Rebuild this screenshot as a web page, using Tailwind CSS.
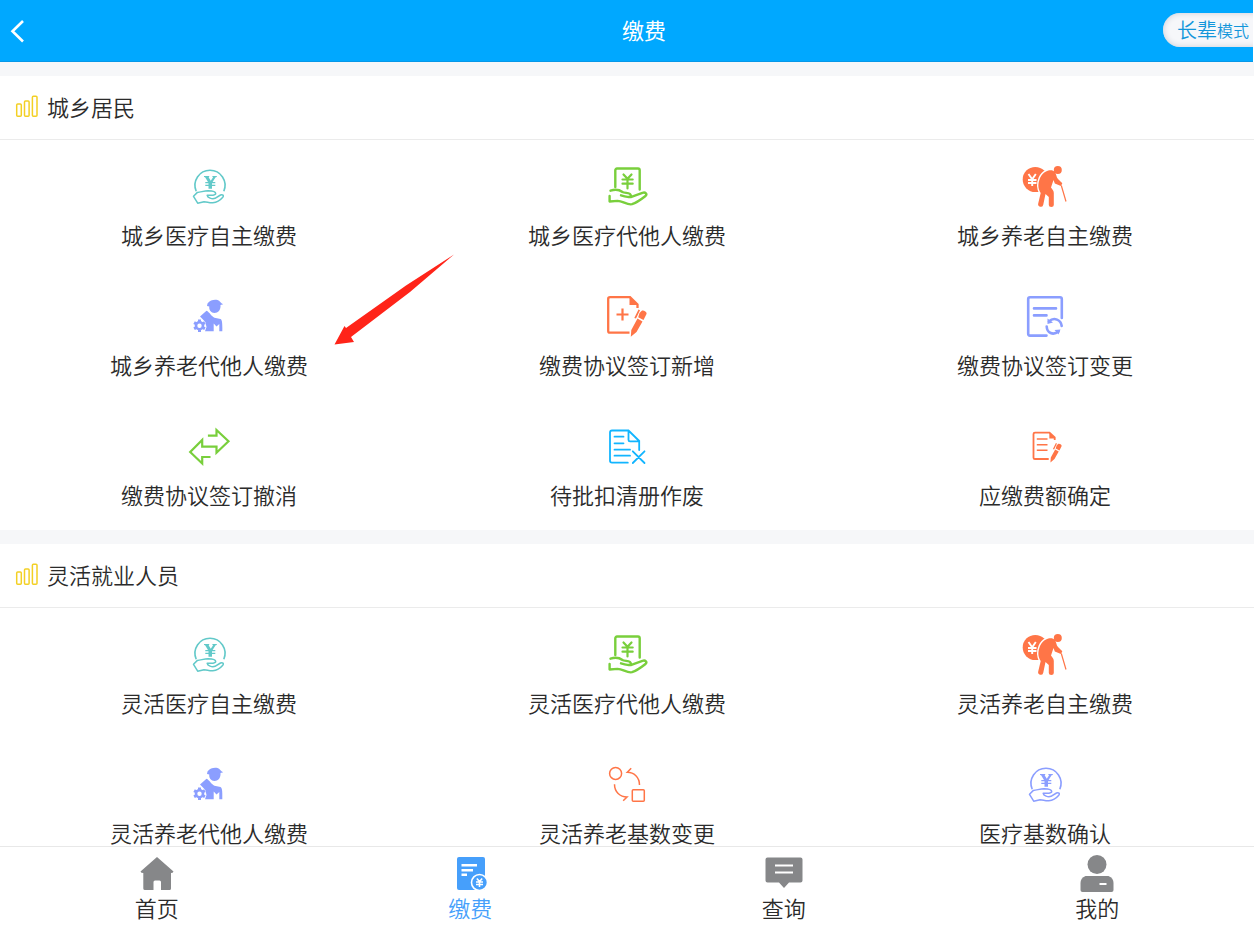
<!DOCTYPE html>
<html lang="zh-CN">
<head>
<meta charset="utf-8">
<meta name="viewport" content="width=device-width, initial-scale=1">
<title>缴费</title>
<script src="https://cdn.jsdelivr.net/npm/@tailwindcss/browser@4"></script>
</head>
<body class="bg-white font-['Noto_Sans_CJK_SC',sans-serif] font-[350] text-[22px] leading-7 text-[#2b2b2b]">
<svg class="hidden" aria-hidden="true">
  <defs>
    <symbol id="bars" viewBox="0 0 24 24"><g fill="none" stroke="#f3d024" stroke-width="1.5"><rect x="1.7" y="10" width="4.6" height="12.3" rx="1"/><rect x="9.5" y="7" width="4.6" height="15.3" rx="1"/><rect x="17.4" y="2.2" width="4.6" height="20.1" rx="1"/></g></symbol>
    <symbol id="coin" viewBox="0 0 48 48">
      <path d="M11.2 28.2A15 15 0 1 1 38.8 28.2" fill="none" stroke="currentColor" stroke-width="1.6"/>
      <path d="M19 13h5.2v1l-.6.2 2.2 3.6 2.3-3.6-.7-.2v-1h4.4v1l-1.2.3-3 4.7h2.7v1.3h-3.3v1.4h3.3V23H27v2.8h-3.5V23h-3.2v-1.3h3.2v-1.4h-3.2V19H23l-2.9-4.7-1.1-.3z" fill="currentColor"/>
      <path d="M8.5 33.3L12.4 29.4C15.500 29.300 19 27.800 23 27.700C26 27.700 30.700 28.500 30.700 30.500C30.700 32.500 26.500 32.400 22.200 32.300C22.500 34.500 27 36.600 30 35.300L35.500 32C37.500 31 39.300 32.600 37.800 34.200C35 37.500 31 39.400 27.800 39.700C24 39.900 22 38.700 19 38.700L12.700 40.200Z" fill="none" stroke="currentColor" stroke-width="1.500" stroke-linejoin="round"/>
    </symbol>
    <symbol id="bill" viewBox="0 0 48 48"><g fill="none" stroke="#79cf3c" stroke-width="2.400" stroke-linecap="round" stroke-linejoin="round">
      <path d="M12.300 24V7.200a1.700 1.700 0 0 1 1.700-1.700H35a1.700 1.700 0 0 1 1.700 1.700V26.500"/>
      <path d="M7.500 27.700C14 25.500 17 27.200 19.500 29C22 30.500 27.800 29.300 27.800 32.600C27.800 35.200 22 33.600 18 32.300M27.800 34C32 32.500 36 31 39.500 29.800C42.500 28.900 44.500 31 42.500 33C38 36.500 33 40 29 41.200C24 42.300 20 38 14.500 37.900L6.600 38.500V33"/>
      <path d="M20.500 11.500L24.500 15.800L28.500 11.500M19.500 16.500H29.700M19.500 20.700H29.700M24.500 16V25.500" stroke-width="2.200"/></g></symbol>
    <symbol id="elder" viewBox="0 0 48 48">
      <circle cx="14.300" cy="16.500" r="12.600" fill="#ff7547"/>
      <path d="M7.500 11L11.200 16.300L14.800 11M7 17H15.500M7 20H15.500M11.200 16V23" fill="none" stroke="#fff" stroke-width="1.900"/>
      <path d="M25 8.500C28 6.800 32 6.500 33.800 9C35.500 11 35.200 14.300 37 16L41.300 20.200L40 23L33.800 20.500L32.500 17L30 24.500C31.500 26.500 32.800 28 32.800 30V42Q32.800 44 30.300 44Q27.800 44 27.800 42V34L24.500 31L22.200 42Q21.400 44.400 19.100 43.700Q16.600 43 17.200 40.500L19.700 30C16.500 25 17 20 19 15C20.500 11.500 22.500 9.800 25 8.500Z" fill="#ff7547" stroke="#fff" stroke-width="3" style="paint-order:stroke"/>
      <circle cx="36.800" cy="7" r="4" fill="#ff7547"/>
      <path d="M40.300 22.500L45 38.500" stroke="#ff7547" stroke-width="1.200"/>
    </symbol>
    <symbol id="worker" viewBox="0 0 48 48">
      <g fill="#8b9eff"><path d="M22 13L22.500 10.500C25 7 29 6.300 32.500 6.900C35 7.500 35.500 10 38.200 11.200L35.500 12C36 17 33 20 29.500 20C26 20 23.800 17 24.300 13.500Z"/>
      <path d="M15 23.500L21.500 17.700C24.500 19 26 23 29.500 24.700L35.500 26C37 27 37.500 29 37.300 38.300H34.300V31L31.500 33.500L28.700 30.500V38.300H20L21.500 34L20.300 29L17.500 26Z"/></g>
      <circle cx="14.500" cy="32.700" r="3.500" fill="none" stroke="#8b9eff" stroke-width="2.600"/>
      <path d="M14.500 26.500v3M14.500 36v3M9.100 29.600l2.500 1.400M17.400 34.400l2.500 1.400M9.100 35.800l2.500-1.400M17.400 31l2.500-1.400" stroke="#8b9eff" stroke-width="3"/>
    </symbol>
    <symbol id="pen" viewBox="0 0 48 48"><path d="M36.500 20L38.500 18C40 16.500 44.300 18.800 43.500 21L40.500 27L35.200 24.200ZM34.500 25.500L39.500 28.500L33.500 39L27.800 43.800L28.300 37ZM35.500 16.500L37 17.300L33 25.500L31.300 25Z" fill="#ff7547"/></symbol>
    <symbol id="addSign" viewBox="0 0 48 48">
      <path d="M26.500 39.700H7Q5.200 39.700 5.200 38V5.700Q5.200 4.100 7 4.100H27L34.500 11.500V15" fill="none" stroke="#ff7547" stroke-width="2.300"/><path d="M26.500 4L35 12H26.500Z" fill="#ff7547"/>
      <path d="M13.500 21.500H25.500M19.500 15.500V27.500" stroke="#ff7547" stroke-width="2.200"/><use href="#pen"/>
    </symbol>
    <symbol id="editSign" viewBox="0 0 48 48">
      <path d="M27.700 36H14Q12.500 36 12.500 34.700V11Q12.500 9.700 14 9.700H28.500L33.700 14.500V17" fill="none" stroke="#ff7547" stroke-width="1.800"/><path d="M28.300 9.500L34.400 15.500H28.300Z" fill="#ff7547"/>
      <path d="M15.800 16H26.500M15.800 21.700H26.500M15.800 27.300H26.500" stroke="#ff7547" stroke-width="1.600"/><use href="#pen" transform="translate(9.700 8.300) scale(.71)"/>
    </symbol>
    <symbol id="refresh" viewBox="0 0 48 48"><g fill="none" stroke="#8b9eff" stroke-width="2.600" stroke-linecap="round">
      <path d="M25.500 42.600H9Q7.200 42.600 7.200 40.800V6Q7.200 4.200 9 4.200H39Q40.800 4.200 40.800 6V25M13 15.400H35M13 22.400H25.500"/>
      <path d="M28 28.500C33 23.500 40 27 40.700 33M25.700 33.500C26 40 32 42.800 37.500 38.500"/></g><path d="M26.500 25.500L32 29.500L26.500 31ZM33.500 37L39.500 36.500L37.500 41.500Z" fill="#8b9eff"/></symbol>
    <symbol id="swap" viewBox="0 0 48 48"><path d="M22.900 12.700H31.500V7L43.500 18.300L31.500 29.700V23.700H17.200V17L5.200 29L17.200 40.500V34H25.500" fill="none" stroke="#79cf3c" stroke-width="2.200"/></symbol>
    <symbol id="voidDoc" viewBox="0 0 48 48"><path d="M24.800 39.700H9Q7 39.700 7 37.700V9.500Q7 7.500 9 7.500H25.500L36.200 18V27M25.500 7.500V17Q25.500 18.300 27 18.300H36M11.500 13.700H20.500M11.500 20.300H20.500M11.500 26.700H27M11.500 32.700H27M29.800 28.300L41.500 40M41.500 28.300L29.800 40" fill="none" stroke="#12b5ff" stroke-width="1.800" stroke-linecap="round"/></symbol>
    <symbol id="cycle" viewBox="0 0 48 48"><g fill="none" stroke="#ff7547" stroke-width="1.500"><circle cx="12.600" cy="12.400" r="6"/><rect x="29.300" y="28.800" width="12" height="11.500" rx="1"/><path d="M11.500 23.300C11.500 31 17 36 24 36L20.200 39.700M36.500 24C36.500 16.500 31 11.300 24.300 11.300L28.200 7.300"/></g></symbol>
  </defs>
</svg>
<div class="relative flex h-screen flex-col overflow-hidden">
  <header class="relative mr-px flex h-[62px] shrink-0 items-center overflow-hidden border-b border-[#0798e8] bg-[#00a8ff] text-white">
    <button type="button" aria-label="返回" class="flex h-full w-[35px] items-center pl-2">
      <svg class="h-6 w-5" viewBox="0 0 20 24" fill="none" stroke="#fff" stroke-width="2.600"><path d="M15 2L4.500 12.300L15 22.500"/></svg>
    </button>
    <h1 class="flex-1 pb-1 text-center font-normal">缴费</h1>
    <button type="button" class="absolute top-[13px] -right-4 flex h-[34px] items-center rounded-l-full bg-[#f6f7fa] pr-5 pl-[14px] text-[20px] text-[#1296db] shadow-[inset_0_0_6px_#c9ccd6]">长辈<span class="text-base">模式</span></button>
  </header>

  <main class="min-h-0 flex-1 overflow-y-auto bg-[#f6f7f9] [scrollbar-width:none]">
    <section class="mt-[14px] bg-white">
      <h2 class="flex h-16 items-center gap-2 border-b border-[#ebebeb] pb-1 pl-[15px]"><svg class="size-6"><use href="#bars"/></svg>城乡居民</h2>
      <div class="grid grid-cols-3">
        <a href="#" class="flex h-[130px] flex-col items-center pt-[23px]"><svg class="size-12 text-[#62c9c9]"><use href="#coin"/></svg><span class="mt-[9px]">城乡医疗自主缴费</span></a>
        <a href="#" class="flex h-[130px] flex-col items-center pt-[23px]"><svg class="size-12"><use href="#bill"/></svg><span class="mt-[9px]">城乡医疗代他人缴费</span></a>
        <a href="#" class="flex h-[130px] flex-col items-center pt-[23px]"><svg class="size-12"><use href="#elder"/></svg><span class="mt-[9px]">城乡养老自主缴费</span></a>
        <a href="#" class="flex h-[130px] flex-col items-center pt-[23px]"><svg class="size-12"><use href="#worker"/></svg><span class="mt-[9px]">城乡养老代他人缴费</span></a>
        <a href="#" class="flex h-[130px] flex-col items-center pt-[23px]"><svg class="size-12"><use href="#addSign"/></svg><span class="mt-[9px]">缴费协议签订新增</span></a>
        <a href="#" class="flex h-[130px] flex-col items-center pt-[23px]"><svg class="size-12"><use href="#refresh"/></svg><span class="mt-[9px]">缴费协议签订变更</span></a>
        <a href="#" class="flex h-[130px] flex-col items-center pt-[23px]"><svg class="size-12"><use href="#swap"/></svg><span class="mt-[9px]">缴费协议签订撤消</span></a>
        <a href="#" class="flex h-[130px] flex-col items-center pt-[23px]"><svg class="size-12"><use href="#voidDoc"/></svg><span class="mt-[9px]">待批扣清册作废</span></a>
        <a href="#" class="flex h-[130px] flex-col items-center pt-[23px]"><svg class="size-12"><use href="#editSign"/></svg><span class="mt-[9px]">应缴费额确定</span></a>
      </div>
    </section>
    <section class="mt-[14px] bg-white">
      <h2 class="flex h-16 items-center gap-2 border-b border-[#ebebeb] pb-1 pl-[15px]"><svg class="size-6"><use href="#bars"/></svg>灵活就业人员</h2>
      <div class="grid grid-cols-3">
        <a href="#" class="flex h-[130px] flex-col items-center pt-[23px]"><svg class="size-12 text-[#62c9c9]"><use href="#coin"/></svg><span class="mt-[9px]">灵活医疗自主缴费</span></a>
        <a href="#" class="flex h-[130px] flex-col items-center pt-[23px]"><svg class="size-12"><use href="#bill"/></svg><span class="mt-[9px]">灵活医疗代他人缴费</span></a>
        <a href="#" class="flex h-[130px] flex-col items-center pt-[23px]"><svg class="size-12"><use href="#elder"/></svg><span class="mt-[9px]">灵活养老自主缴费</span></a>
        <a href="#" class="flex h-[130px] flex-col items-center pt-[23px]"><svg class="size-12"><use href="#worker"/></svg><span class="mt-[9px]">灵活养老代他人缴费</span></a>
        <a href="#" class="flex h-[130px] flex-col items-center pt-[23px]"><svg class="size-12"><use href="#cycle"/></svg><span class="mt-[9px]">灵活养老基数变更</span></a>
        <a href="#" class="flex h-[130px] flex-col items-center pt-[23px]"><svg class="size-12 text-[#8b9eff]"><use href="#coin"/></svg><span class="mt-[9px]">医疗基数确认</span></a>
      </div>
    </section>
  </main>

  <nav class="grid h-[84px] shrink-0 grid-cols-4 border-t border-[#e8e8e8] bg-white pt-[6px]">
    <a href="#" class="flex flex-col items-center"><svg class="size-10" viewBox="0 0 40 40"><path d="M20 4L36.500 18.500Q36 20 34 20V35.500Q34 37 32.500 37H24V29Q24 27.500 22.500 27.500H18Q16.500 27.500 16.500 29V37H8Q6.300 37 6.300 35.500V20Q4 20 3.500 18.500Z" fill="#868789"/></svg><span>首页</span></a>
    <a href="#" aria-current="page" class="flex flex-col items-center text-[#469ffb]"><svg class="size-10" viewBox="0 0 40 40"><rect x="7" y="4" width="28" height="33" rx="2" fill="#469ffb"/><path d="M11.500 12.300H27M11.500 17.300H23M11.500 21.800H17" stroke="#fff" stroke-width="2.400"/><circle cx="29.500" cy="29.500" r="8" fill="#469ffb" stroke="#fff" stroke-width="1.600"/><path d="M26.800 25.500L29.500 28.500L32.200 25.500M26 29H33M26 31.500H33M29.500 28.500V34" fill="none" stroke="#fff" stroke-width="1.600"/></svg><span>缴费</span></a>
    <a href="#" class="flex flex-col items-center"><svg class="size-10" viewBox="0 0 40 40"><path d="M3.500 4.500H36.500Q38.500 4.500 38.500 6.500V27.500Q38.500 29.500 36.500 29.500H25L20 35L15 29.500H3.500Q1.500 29.500 1.500 27.500V6.500Q1.500 4.500 3.500 4.500Z" fill="#868789"/><path d="M11 12.500H29M11 19.500H29" stroke="#fff" stroke-width="2"/></svg><span>查询</span></a>
    <a href="#" class="flex flex-col items-center"><svg class="size-10" viewBox="0 0 40 40"><circle cx="20" cy="11.500" r="9.500" fill="#868789"/><path d="M8.500 23H31.500Q36.500 25 36.500 30V37Q36.500 39 34.500 39H5.500Q3.500 39 3.500 37V30Q3.500 25 8.500 23Z" fill="#868789"/><path d="M22.500 31H29.500" stroke="#fff" stroke-width="2"/></svg><span>我的</span></a>
  </nav>

  <svg class="pointer-events-none absolute top-[250px] left-[330px] h-[100px] w-[130px]" viewBox="0 0 130 100" aria-hidden="true"><path d="M124 4.500L76 35.500L16 78L14.500 76L4.500 94.500L24 92L21 87L80 42Z" fill="#ff2419"/></svg>
</div>
</body>
</html>
